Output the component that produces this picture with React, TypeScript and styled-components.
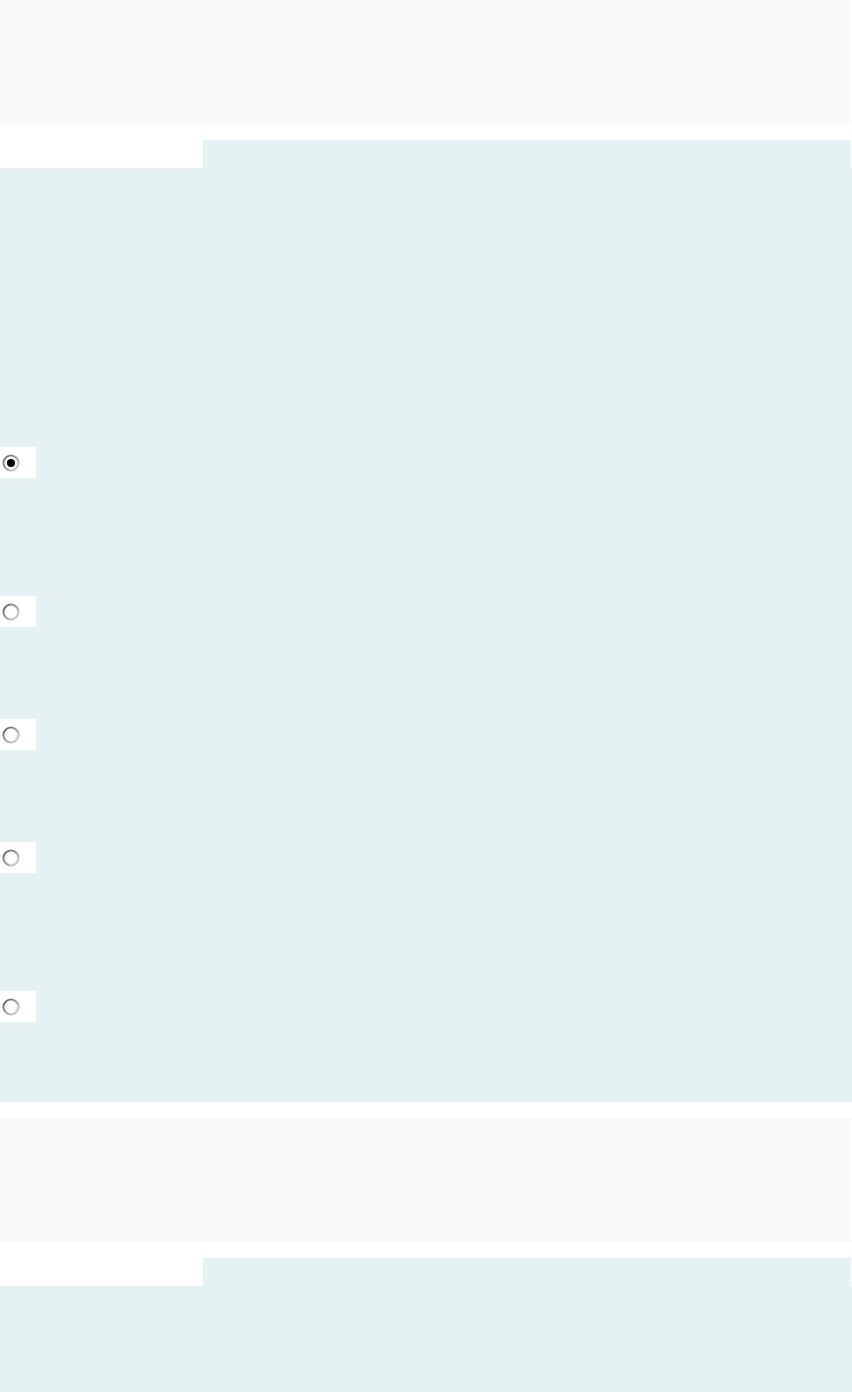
import React from "react"
import styled, { createGlobalStyle } from "styled-components"

const GlobalStyle = createGlobalStyle`
  html, body {
    margin: 0;
    padding: 0;
    background: #ffffff;
    font-family: "Liberation Sans", Arial, sans-serif;
  }
`

const Page = styled.div`
  width: 852px;
  display: flex;
  flex-direction: column;
`

const TopBar = styled.div`
  width: 851px;
  height: 124px;
  background: #f7f9fb;
  margin-bottom: 16px;
`

const TabRow = styled.div`
  display: flex;
  width: 851px;
  height: 28px;
`

const TabSpacer = styled.div`
  width: 203px;
  background: #ffffff;
`

const Tab = styled.div`
  flex: 1;
  background: #e7f2f4;
`

const Panel = styled.div<{ $height?: number }>`
  background: #e7f2f4;
  display: flex;
  flex-direction: column;
  padding-top: 279px;
  padding-bottom: 80px;
  margin-bottom: 16px;
  ${(p) => (p.$height ? `height: ${p.$height}px; padding: 0; margin: 0;` : "")}
`

const OptionBox = styled.label<{ $gap: number }>`
  width: 36px;
  height: 31px;
  background: #ffffff;
  margin-top: ${(p) => p.$gap}px;
  display: flex;
  align-items: center;
  padding-left: 2px;
  box-sizing: border-box;
`

const Radio = ({ checked }: { checked?: boolean }) => (
  <svg width="18" height="18" viewBox="0 0 18 18">
    <defs>
      <linearGradient id={checked ? "rg-on" : "rg-off"} x1="0" y1="0" x2="1" y2="1">
        <stop offset="0" stopColor={checked ? "#6f6f6f" : "#5f5f5f"} />
        <stop offset="0.5" stopColor={checked ? "#9a9a9a" : "#a0a0a0"} />
        <stop offset="1" stopColor="#dcdcdc" />
      </linearGradient>
    </defs>
    <circle cx="9" cy="9" r="7.5" fill="#ffffff" stroke={`url(#${checked ? "rg-on" : "rg-off"})`} strokeWidth="2.1" />
    <circle cx="9" cy="9" r="6" fill="none" stroke="#eeeeee" strokeWidth="0.8" />
    {checked && <circle cx="9" cy="9" r="4" fill="#000000" />}
  </svg>
)

const options = [
  { gap: 0, checked: true },
  { gap: 118 },
  { gap: 92 },
  { gap: 92 },
  { gap: 118 },
]

const App = () => (
  <Page>
    <GlobalStyle />
    <TopBar />
    <TabRow>
      <TabSpacer />
      <Tab />
    </TabRow>
    <Panel>
      {options.map((o, i) => (
        <OptionBox key={i} $gap={o.gap}>
          <Radio checked={o.checked} />
        </OptionBox>
      ))}
    </Panel>
    <TopBar />
    <TabRow>
      <TabSpacer />
      <Tab />
    </TabRow>
    <Panel $height={106} />
  </Page>
)

export default App
